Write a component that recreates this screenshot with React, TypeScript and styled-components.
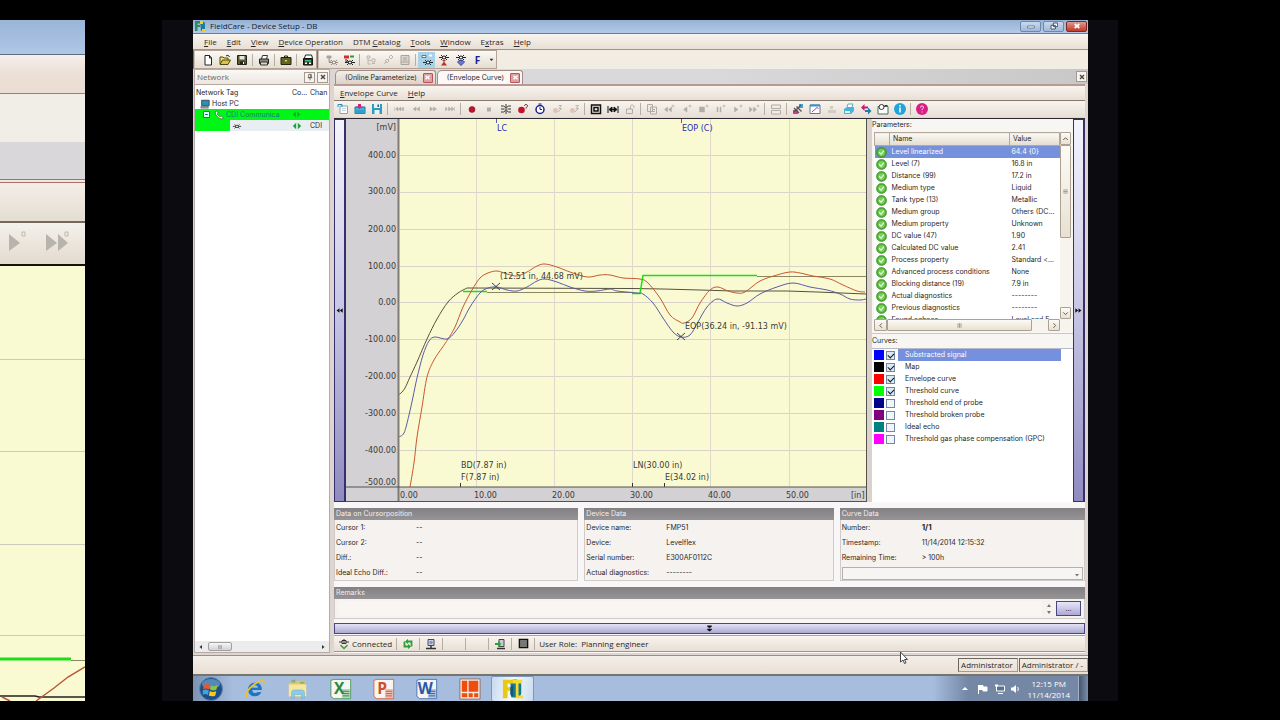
import React from "react";
import styled, { createGlobalStyle, css } from "styled-components";

const UI = `"Open Sans", "Noto Sans", sans-serif`;
const DENSE = `Inter, "DejaVu Sans Condensed", sans-serif`;
const PLOT = `"DejaVu Sans", sans-serif`;

const Global = createGlobalStyle`
  * { box-sizing: border-box; }
  body { margin: 0; background: #000; font: 8px/12px ${UI}; color: #2b2725; }
  button, input, select, textarea { font: inherit; color: inherit; margin: 0; }
  button { padding: 0; border: 0; background: none; }
  u { text-decoration-thickness: 1px; text-underline-offset: 1px; }
`;

/* ---------- page ---------- */
const Stage = styled.div`
  display: flex;
  align-items: stretch;
  min-height: 100vh;
  padding: 20px 0 19px;
  overflow: hidden;
`;
const Backdrop = styled.div`
  flex: 1;
  min-width: 0;
  display: flex;
  margin: 0 162px 0 77px;
  padding: 0 30px 0 31px;
  background: #0b0b10;
`;
const Win = styled.div`
  position: relative;
  flex: 1;
  min-width: 0;
  display: flex;
  flex-direction: column;
  background: #f1ede5;
`;

/* ---------- magnified strip ---------- */
const Strip = styled.div`
  flex: 0 0 85px;
  display: flex;
  flex-direction: column;
`;
const Band = styled.div<{ $h: number; $bg: string; $line?: string }>`
  height: ${(p) => p.$h}px;
  background: ${(p) => p.$bg};
  border-bottom: ${(p) => p.$line ?? "0"};
`;
const StripPlot = styled.svg`
  display: block;
  flex: 1;
  width: 100%;
  background: #fafad2;
`;

/* ---------- window chrome ---------- */
const TitleBar = styled.header`
  display: flex;
  align-items: center;
  height: 14px;
  padding: 0 1px 1px 1px;
  background: linear-gradient(#96b2d4, #b3cae8);
  border-bottom: 1px solid #6f7c90;
`;
const TitleText = styled.span`
  flex: 1;
  padding-left: 4px;
  color: #14202e;
`;
const CaptionButton = styled.button<{ $danger?: boolean }>`
  display: grid;
  place-items: center;
  width: 21px;
  height: 11px;
  margin-left: 2px;
  border: 1px solid ${(p) => (p.$danger ? "#7a2a25" : "#7187aa")};
  border-radius: 2px;
  background: ${(p) =>
    p.$danger ? "linear-gradient(#e09a8c, #c0392b)" : "linear-gradient(#c9d9ee, #9fb9dc)"};
`;
const Bar = styled.div<{ $h: number; $pad?: number; $line?: string }>`
  display: flex;
  align-items: center;
  height: ${(p) => p.$h}px;
  padding-left: ${(p) => p.$pad ?? 0}px;
  background: linear-gradient(#f8f4ef, #e8dfd5);
  border-bottom: 1px solid ${(p) => p.$line ?? "#a58f86"};
`;
const MenuItem = styled.button`
  padding: 0 5px;
  line-height: 12px;
  white-space: nowrap;
`;
const ToolRow = styled.div`
  display: flex;
  height: 19px;
  background: #f1ede3;
`;
const ToolGroup = styled.div`
  display: flex;
  align-items: center;
  padding: 0 0 0 4px;
  background: linear-gradient(#fbf9f5, #e5ddd0);
  border: 1px solid #b3a295;
  border-left: 2px groove #cdbfb5;
`;
const ToolButton = styled.button<{ $on?: boolean; $w?: number }>`
  display: grid;
  place-items: center;
  width: ${(p) => p.$w ?? 17}px;
  height: 16px;
  ${(p) => p.$on && css`background: #a9d2e8;`}
`;
const Sep = styled.span`
  width: 1px;
  height: 12px;
  margin: 0 2px;
  background: #b7aea3;
`;

/* ---------- body ---------- */
const Body = styled.div`
  flex: 1;
  display: flex;
  background: #ded5d0;
`;
const Side = styled.aside`
  flex: 0 0 136px;
  display: flex;
  flex-direction: column;
  margin: 0 4px 2px 1px;
  background: #fff;
  border: 1px solid #b5aca8;
`;
const SideHead = styled.div`
  display: flex;
  align-items: center;
  gap: 2px;
  height: 15px;
  padding: 0 1px 0 2px;
  background: linear-gradient(#fbf9f6, #ece6df);
  border-bottom: 1px solid #b8a9a0;
  color: #6c6864;
`;
const SideTitle = styled.span`
  flex: 1;
`;
const TinyButton = styled.button`
  display: grid;
  place-items: center;
  width: 11px;
  height: 11px;
  border: 1px solid #a39a92;
  background: #f7f4ee;
`;
const Tree = styled.table`
  width: 100%;
  border-collapse: collapse;
  table-layout: fixed;
  font: 7px/11px ${DENSE};
  th, td { padding: 0; height: 11px; line-height: 11px; font-weight: 400; text-align: left; white-space: nowrap; overflow: hidden; }
  thead th { height: 13px; padding-top: 2px; }
  thead th:first-child { padding-left: 1px; }
  svg { display: block; }
`;
const NodeCell = styled.td<{ $indent: number }>`
  && { padding-left: ${(p) => p.$indent}px; }
`;
const NodeLine = styled.span<{ $c?: string }>`
  display: flex;
  align-items: center;
  gap: 2px;
  height: 11px;
  color: ${(p) => p.$c ?? "inherit"};
`;
const TreeRow = styled.tr<{ $fill?: string }>`
  background: ${(p) => p.$fill ?? "none"};
`;
const SideScroll = styled.div`
  display: flex;
  align-items: center;
  justify-content: space-between;
  height: 11px;
  margin-top: auto;
  padding: 0 3px;
  background: #ececec;
`;
const SideThumb = styled.span`
  display: grid;
  place-items: center;
  width: 24px;
  height: 9px;
  margin-right: auto;
  margin-left: 4px;
  border: 1px solid #a0a0a0;
  border-radius: 2px;
  background: linear-gradient(#f6f6f6, #d2d2d2);
`;
const Main = styled.main`
  flex: 1;
  min-width: 0;
  display: flex;
  flex-direction: column;
  padding-bottom: 2px;
`;
const Tabs = styled.div`
  display: flex;
  align-items: flex-end;
  height: 15px;
  padding: 0 1px 0 1px;
  background: linear-gradient(90deg, #d9d9dd, #d9d9db 50%, #c8c8c8);
`;
const Tab = styled.div<{ $active?: boolean }>`
  display: flex;
  align-items: center;
  gap: 6px;
  height: 14px;
  margin-right: 1px;
  padding: 0 2px 0 9px;
  border: 1px solid #a08e86;
  border-bottom: 0;
  border-radius: 5px 3px 0 0;
  background: ${(p) => (p.$active ? "#fbf8f5" : "linear-gradient(#f3eee8, #ddd2c8)")};
`;
const TabLabel = styled.button`
  font: 7px/12px ${DENSE};
  white-space: nowrap;
`;
const TabClose = styled.button`
  display: grid;
  place-items: center;
  width: 10px;
  height: 10px;
  border: 1px solid #b8545c;
  border-radius: 1px;
  background: #e0a0a2;
`;
const TabsEnd = styled.span`
  margin: 0 0 2px auto;
`;
const Doc = styled.div`
  flex: 1;
  display: flex;
  flex-direction: column;
  margin-right: 3px;
  border-top: 2px solid #b89a92;
  background: #f8f6f6;
`;
const Work = styled.div`
  display: flex;
  align-items: stretch;
  border-top: 1px solid #2d2a33;
  background: #d9d2cb;
`;
const SideCollapse = styled.button`
  flex: 0 0 12px;
  display: grid;
  place-items: center;
  border: 1px solid #35306c;
  border-right-width: 2px;
  background: linear-gradient(#f4f4fd, #c8c6e4 50%, #8f8bc0);
`;
const Chart = styled.svg`
  display: block;
  flex: 1;
  min-width: 0;
  height: auto;
  font: 8px ${PLOT};
  fill: #3c3a34;
`;
const Info = styled.section`
  flex: 0 0 201px;
  display: flex;
  flex-direction: column;
  margin-left: 5px;
  background: #f8f6f2;
  font: 7px/12px ${DENSE};
`;
const InfoTitle = styled.h2`
  margin: 0;
  height: 13px;
  font: inherit;
  line-height: 12px;
`;
const ParamBox = styled.div`
  display: grid;
  grid-template-columns: 1fr 11px;
  margin: 0 2px;
`;
const ParamClip = styled.div`
  height: 187px;
  overflow: hidden;
  background: #fff;
`;
const ParamTable = styled.table`
  width: 100%;
  border-collapse: collapse;
  table-layout: fixed;
  th, td { padding: 0 0 0 2px; height: 12px; font-weight: 400; text-align: left; white-space: nowrap; overflow: hidden; }
  td:first-child { padding-left: 1px; }
  th { height: 13px; padding-left: 3px; border: 1px solid #b5a99c; background: linear-gradient(#fbf9f4, #e4dccd); }
`;
const ParamRow = styled.tr<{ $on?: boolean }>`
  background: ${(p) => (p.$on ? "#7590dc" : "none")};
  color: ${(p) => (p.$on ? "#fff" : "inherit")};
  svg { display: block; }
`;
const VScroll = styled.div`
  display: flex;
  flex-direction: column;
  background: #f7f4ee;
`;
const HScroll = styled.div`
  grid-column: 1 / -1;
  display: flex;
  height: 12px;
  padding-right: 11px;
  background: #f7f4ee;
`;
const ScrollPart = styled.button<{ $w?: number; $h?: number; $end?: boolean }>`
  display: grid;
  place-items: center;
  flex: 0 0 auto;
  width: ${(p) => (p.$w ? p.$w + "px" : "auto")};
  height: ${(p) => (p.$h ? p.$h + "px" : "auto")};
  ${(p) => p.$end && css`margin: auto 0 0 auto;`}
  border: 1px solid #aba092;
  border-radius: 1px;
  background: linear-gradient(#fdfbf6, #e8e1d3);
`;
const CurveHead = styled(InfoTitle)`
  height: 16px;
  padding-top: 1px;
  margin-top: 2px;
  border-top: 1px solid #cfc8bf;
  border-bottom: 1px solid #b9b9d0;
`;
const CurveList = styled.ul`
  flex: 1;
  margin: 0;
  padding: 0 12px 0 2px;
  list-style: none;
  background: #fff;
`;
const CurveItem = styled.li<{ $on?: boolean }>`
  display: flex;
  align-items: center;
  height: 12px;
  background: ${(p) => (p.$on ? "linear-gradient(90deg, #fff 24px, #7590dc 24px)" : "none")};
  color: ${(p) => (p.$on ? "#fff" : "inherit")};
`;
const Swatch = styled.span<{ $c: string }>`
  width: 10px;
  height: 10px;
  margin-right: 2px;
  background: ${(p) => p.$c};
`;
const Tick = styled.input`
  appearance: none;
  width: 9px;
  height: 9px;
  border: 1px solid #7388a0;
  background: #f1f4f8;
  &:checked {
    background: #dce9f3;
  }
  &:checked::after {
    content: "";
    display: block;
    width: 5px;
    height: 3px;
    margin: 1px;
    border: solid #101820;
    border-width: 0 0 1px 1px;
    transform: rotate(-45deg);
  }
`;
const CurveLabel = styled.label`
  padding-left: 10px;
`;

/* ---------- data cards ---------- */
const Cards = styled.div`
  display: grid;
  grid-template-columns: 244fr 249fr 245fr;
  gap: 6px;
  margin-top: 6px;
`;
const Card = styled.section`
  background: #f5f2f0;
  border: 1px solid #cfcbc8;
  border-top: 0;
  font: 7px/12px ${DENSE};
`;
const CardHead = styled.h3`
  margin: 0 -1px;
  height: 12px;
  padding-left: 2px;
  background: linear-gradient(#828082, #979497);
  color: #f1efef;
  font: inherit;
`;
const Fields = styled.dl`
  display: grid;
  grid-template-columns: 80px 1fr;
  grid-auto-rows: 15px;
  margin: 0;
  padding-left: 1px;
  line-height: 15px;
  dt, dd { margin: 0; }
`;
const Strong = styled.b`
  font-size: 8px;
`;
const Combo = styled.select`
  display: block;
  width: calc(100% - 2px);
  height: 13px;
  margin: 2px 1px 0;
  border: 1px solid #b3b0ae;
  background: #f7f5f4;
  appearance: none;
`;
const ComboWrap = styled.div`
  position: relative;
  svg { position: absolute; right: 4px; top: 5px; }
`;
const Remarks = styled(Card)`
  margin-top: 6px;
  height: 32px;
`;
const RemarkRow = styled.div`
  display: flex;
  align-items: center;
  gap: 4px;
  height: 19px;
  padding: 0 3px 0 4px;
`;
const RemarkText = styled.input`
  flex: 1;
  height: 15px;
  border: 0;
  background: #f8f5f3;
`;
const More = styled.button`
  width: 25px;
  height: 15px;
  border: 1px solid #4b4680;
  background: linear-gradient(#e8e7f7, #aba8d4);
  line-height: 8px;
`;
const Fold = styled.button`
  display: grid;
  place-items: center;
  height: 11px;
  margin-top: 4px;
  border: 1px solid #4b4680;
  background: linear-gradient(#e4e2f6, #aba8d2);
`;
const Status = styled(Bar)`
  margin-top: 1px;
  border-top: 1px solid #aaa49d;
`;
const StatusText = styled.span`
  padding: 0 2px;
`;
const StatusCell = styled.span`
  display: grid;
  place-items: center;
  width: 18px;
`;
const AppStatus = styled.footer`
  display: flex;
  align-items: center;
  justify-content: flex-end;
  gap: 1px;
  height: 21px;
  background: linear-gradient(#f4eee8, #e9e0d4);
  border-top: 1px solid #9d8f86;
  border-bottom: 2px solid #77736f;
`;
const UserBox = styled.span`
  height: 14px;
  padding: 0 4px 0 2px;
  border: 1px solid #a59a8e;
  border-top-color: #6c655e;
  border-left-color: #6c655e;
`;

/* ---------- task bar ---------- */
const TaskBar = styled.nav`
  display: flex;
  align-items: center;
  height: 25px;
  background: linear-gradient(90deg, #7d93b4, #a6bddd 40px, #a6bddd 740px, #7488a5 775px);
`;
const TaskButton = styled.button<{ $on?: boolean; $start?: boolean }>`
  display: grid;
  place-items: center;
  width: ${(p) => (p.$start ? 35 : 43)}px;
  height: 25px;
  margin-right: ${(p) => (p.$start ? 5 : 0)}px;
  ${(p) =>
    p.$on &&
    css`
      border: 1px solid #7d97bb;
      border-bottom: 0;
      border-radius: 2px;
      background: linear-gradient(100deg, #c8daee, #f3f8fc 50%, #cadcf0);
    `}
`;
const Tray = styled.div`
  display: flex;
  align-items: center;
  gap: 6px;
  margin-left: auto;
  color: #fff;
`;
const Clock = styled.time`
  padding: 0 2px;
  text-align: center;
  line-height: 11px;
`;
const ShowDesktop = styled.button`
  width: 10px;
  height: 25px;
  border-left: 1px solid #9fb0c8;
  background: linear-gradient(90deg, #48566c, #7a8da9);
`;
const Pointer = styled.svg`
  position: absolute;
  left: 79%;
  bottom: 36px;
`;

/* ---------- icons ---------- */
const dev = (c = "#333") => (
  <g stroke={c} fill="none">
    <path d="M1 6.500h10M3 4l2 2M9 4L7 6M3 9l2-2M9 9L7 7" />
    <circle cx="6" cy="6.500" r="1.500" fill="#fff" />
  </g>
);
const seek = (d: string, sup = false) => (
  <g fill="#b3aca4" stroke="#b3aca4">
    <path d={d} strokeWidth=".5" />
    {sup && <circle cx="10" cy="3" r="1" fill="none" strokeWidth=".7" />}
  </g>
);
const art: Record<string, React.ReactNode> = {
  new: <path d="M3 1.500h4.500L9.500 4v7H3zM7.500 1.500V4h2" fill="#fff" stroke="#222" />,
  open: (
    <>
      <path d="M1 10V3h3l1 1h4v2" fill="#f3e27a" stroke="#4d4a12" />
      <path d="M1 10.500L3.500 6h8L9 10.500z" fill="#d9c34a" stroke="#4d4a12" />
      <path d="M7 2c1.500-1.200 3-.5 3.500 1" fill="none" stroke="#222" />
    </>
  ),
  save: (
    <>
      <path d="M1.500 1.500h9v9h-9z" fill="#5d5c30" stroke="#222" />
      <path d="M3.500 2h5v3.500h-5z" fill="#e8e6dc" />
      <path d="M4 7.500h4.500v3H4z" fill="#222" />
      <path d="M7 8h1v2H7z" fill="#fff" />
    </>
  ),
  print: (
    <>
      <path d="M3.500 5L4.500 1.500h5L8.500 5" fill="#fff" stroke="#333" />
      <path d="M1.500 5h9v4.500h-9z" fill="#8a887c" stroke="#222" />
      <path d="M2.500 8h7v3h-7z" fill="#d8d6c8" stroke="#333" />
    </>
  ),
  bag: (
    <>
      <path d="M4.500 4V2h3v2" fill="none" stroke="#222" />
      <path d="M1 3.500h10v7H1z" fill="#62661f" stroke="#23250c" />
      <path d="M5 6h2v1.500H5z" fill="#d8d27c" />
    </>
  ),
  catalog: (
    <>
      <path d="M2.500 4l1-3h6l1 3" fill="#fff" stroke="#222" />
      <path d="M1.500 4.500h9v6.500h-9z" fill="#333" stroke="#111" />
      <path d="M3 6h6v1.500H3z" fill="#39c06c" />
      <path d="M3 8.500h2v1.500H3zM7 8.500h2v1.500H7z" fill="#fff" />
    </>
  ),
  addDev: (
    <>
      <path d="M1 2h4v2H1zM3 4v4h2" fill="#aaa49c" stroke="#aaa49c" />
      <g transform="translate(2 2)">{dev("#8d8880")}</g>
    </>
  ),
  delDev: (
    <>
      <path d="M1 1.500h5v3H1z" fill="#d22c2c" />
      <path d="M3 5v3h2" fill="none" stroke="#333" />
      <path d="M7 2.500h4" stroke="#2b9a3c" strokeWidth="2" />
      <g transform="translate(1 2)">{dev("#222")}</g>
    </>
  ),
  treeOff: <path d="M2 2h3v2H2zM3 4v6h3M3 6.500h3M7 5h3v3H7zM7 9.500h3" fill="none" stroke="#bdb6ae" />,
  linkOff: <path d="M2 10l2.500-2.500M5 5l2 2-2 2-2-2zM7 3l2 2 2-2-2-2zM6 6l1-1" fill="none" stroke="#bdb6ae" />,
  docOff: <path d="M2 1.500h8v9H2zM4 4h4M4 6h4M2 8h8" fill="#dcd6cf" stroke="#aaa39b" />,
  online: (
    <>
      <path d="M1 1.500h4v2H1z" fill="#fff" stroke="#4b7bb0" />
      <path d="M8 1.500h3" stroke="#fff" strokeWidth="2" />
      <g transform="translate(1 2)">{dev("#1c2b3b")}</g>
    </>
  ),
  upload: (
    <>
      <g transform="translate(0 -3)">{dev("#222")}</g>
      <path d="M3 11.500L6 7.500l3 4zM4 6h4L6 8z" fill="#b8322c" />
    </>
  ),
  download: (
    <>
      <g transform="translate(0 -3)">{dev("#222")}</g>
      <path d="M6 11.500L2.500 8 4 6.500h4L9.500 8z" fill="#6b7ad0" stroke="#3a468f" />
    </>
  ),
  caret: <path d="M3.500 5h5L6 8z" fill="#222" />,
  sheet: (
    <>
      <path d="M3 3h7.500v7.500H3z" fill="#fff" stroke="#7fa6bc" />
      <path d="M1 4V1.500h4V4" fill="none" stroke="#1e8fbf" />
      <path d="M5 5.500h4M5 7.500h4" stroke="#b9d0dc" />
    </>
  ),
  openBlue: (
    <>
      <path d="M1 4h10v6.500H1z" fill="#3cb6dc" stroke="#187aa0" />
      <path d="M4 1h3v2.500h2L5.500 6 2 3.500h2z" fill="#d8227c" />
      <path d="M1 7h10v3.500H1z" fill="#2aa0cc" />
    </>
  ),
  saveBlue: (
    <>
      <path d="M1 1h10v10H1z" fill="#2b9cc4" />
      <path d="M3 1h6v4H3zM3.500 7h5v4h-5z" fill="#e9f3f6" />
      <path d="M6.500 1.500h1.500v2.500H6.500z" fill="#20607a" />
    </>
  ),
  first: seek("M1.500 4v4M5 4L2.500 6 5 8zM8 4L5.500 6 8 8zM10.500 4L8.500 6l2 2z"),
  prev: seek("M6 4L3 6l3 2zM9.500 4L6.500 6l3 2z"),
  next: seek("M3 4l3 2-3 2zM6.500 4l3 2-3 2z"),
  last: seek("M1.500 4l2 2-2 2zM4.500 4L7 6 4.500 8zM7.500 4L10 6 7.500 8zM10.500 4v4"),
  rec: <circle cx="6" cy="6.500" r="3" fill="#c3122a" stroke="#7c0a18" strokeWidth=".5" />,
  stop: <path d="M4 4.500h4v4H4z" fill="#b3aca4" />,
  tune: <path d="M6 1v10M3.500 3l2 1.500M1 3h2.500M1 6h3.500M1 9h2.500l2-1.500M8.500 3l-2 1.500M11 3H8.500M11 6H7.500M11 9H8.500l-2-1.500" stroke="#333" fill="none" />,
  recQ: (
    <>
      <circle cx="4.500" cy="7" r="3.300" fill="#c3122a" />
      <path d="M7.500 3c0-2 3-2 3 0 0 1-1.500 1-1.500 2.500" fill="none" stroke="#5a1a1a" />
    </>
  ),
  timer: (
    <>
      <circle cx="6" cy="6.500" r="4" fill="#fff" stroke="#16208f" strokeWidth="1.500" />
      <path d="M6 4v2.500h2M4.500 1h3" fill="none" stroke="#16208f" />
    </>
  ),
  ghost: (
    <>
      <circle cx="4.500" cy="7.500" r="2.500" fill="#dfc3ba" />
      <path d="M7.500 2.500h3L8 5.500h2.500L7 9" fill="none" stroke="#c3b4ab" />
    </>
  ),
  frame: <path d="M1.500 2h9v8.500h-9zM4 4.500h4v3.500H4z" fill="none" stroke="#111" strokeWidth="1.500" />,
  span: <path d="M1 3v7M11 3v7M2 6.500l3-2.500v5zM10 6.500L7 4v5zM4 6.500h4" fill="#111" stroke="#111" />,
  unlock: <path d="M2.500 6h6v4.500h-6zM6.500 6V3.500c0-2 3.500-2 3.500 0V5" fill="none" stroke="#b3aca4" />,
  copy: <path d="M1.500 1.500h5v7h-5zM4.500 4h6v7h-6zM6 6.500h3M6 8.500h3" fill="#efeae4" stroke="#b3aca4" />,
  dPrev2: seek("M4.500 4v5L1.500 6.500zM8.500 4v5L5.500 6.500z", true),
  dPrev: seek("M7 4v5L3.500 6.500z", true),
  dStop: seek("M2.500 4h5v5h-5z", true),
  dPause: seek("M3 4h1v5H3zM6 4h1v5H6z", true),
  dNext: seek("M3.500 4v5L7 6.500z", true),
  dNext2: seek("M1.500 4v5l3-2.500zM5.500 4v5l3-2.500z", true),
  split: <path d="M1.500 2h9v3.500h-9zM1.500 7.500h9V11h-9z" fill="#f1ece6" stroke="#b3aca4" />,
  wand: (
    <>
      <path d="M1 7h5v4H1z" fill="#d8379a" />
      <path d="M7 1h4v4H7z" fill="#3ba3d8" />
      <path d="M2 5l5 5M4.500 3.500l5 5M2 9l7-7" stroke="#555" strokeWidth="1.300" />
    </>
  ),
  graph: (
    <>
      <path d="M1 2h10v8.500H1z" fill="#fff" stroke="#5f7d9c" />
      <path d="M1 2.500h10" stroke="#3c8fc9" strokeWidth="2" />
      <path d="M3 9l5-4.500 1.500 1" stroke="#c03a8a" fill="none" />
    </>
  ),
  grey: <path d="M2 7h8v3H2zM4 3h3v3H4z" fill="#d2ccc5" />,
  printBlue: (
    <>
      <path d="M4 4l1-3h5L9 4" fill="#fff" stroke="#6aa6c4" />
      <path d="M1 6l3-2h7v4l-3 3H1z" fill="#45b5dd" />
      <path d="M2 8h5v2H2z" fill="#e3f4fa" />
    </>
  ),
  swap: (
    <>
      <path d="M1 4.500L4.500 1v2.500H8v2H4.500V8z" fill="#c51f74" />
      <path d="M11.500 8L8 4.500V7H5v2h3v2.500z" fill="#1c7fae" />
    </>
  ),
  folderClock: (
    <>
      <path d="M1 3.500h10V11H1z" fill="#fdfdfa" stroke="#4c6a60" />
      <circle cx="4.500" cy="4" r="2.500" fill="#fff" stroke="#333" />
      <path d="M7.500 2.500h3" stroke="#333" />
    </>
  ),
  info: (
    <>
      <circle cx="6" cy="6" r="6" fill="#22a4da" />
      <path d="M6 2v1.500M6 4.500v5" stroke="#fff" strokeWidth="1.500" />
    </>
  ),
  help: (
    <>
      <circle cx="6" cy="6" r="6" fill="#d81f86" />
      <path d="M4.500 4.500c0-2 3-2 3 0 0 1-1.500 1-1.500 2.500M6 8.500V9.500" fill="none" stroke="#fff" />
    </>
  ),
  device: dev(),
  ok: (
    <>
      <circle cx="6" cy="6" r="5.500" fill="#4cab32" stroke="#3c8f2c" strokeWidth=".7" />
      <circle cx="6" cy="6" r="3.700" fill="#78cf58" />
      <path d="M3.500 5.500l2 2.500L8.500 4" fill="none" stroke="#e6fbdc" strokeWidth="1.300" />
    </>
  ),
  pc: (
    <>
      <path d="M2 1.500h9v6.500H2z" fill="#2f8fb0" stroke="#24424f" />
      <path d="M1 9h9v2H1z" fill="#9aa4a8" stroke="#333" strokeWidth=".5" />
    </>
  ),
  phone: (
    <path d="M1.500 2l2-1 1.500 2.500-1 1c.5 1.500 2 3 3.500 3.500l1-1L11 9l-1 2C6 11 1 6 1.500 2z" fill="#e4fbe0" stroke="#2d7a34" />
  ),
  conn: <path d="M5 2v8L1 6zM7 2v8l4-4z" fill="#1ea33a" />,
  connected: (
    <>
      <path d="M1 4h3M8 4h3M4 2.500h4v3H4zM6 1v4" fill="none" stroke="#333" />
      <path d="M2.500 7L6 10.500 9.500 7" fill="none" stroke="#3d9a47" strokeWidth="1.500" />
    </>
  ),
  refresh: (
    <g fill="none" stroke="#2f9c3c" strokeWidth="1.800">
      <path d="M9.500 8.500V3.500H5M2.500 3.500V8.500H7" />
      <path d="M5.500 1.500L3.500 3.500l2 2zM6.500 6.500l2 2-2 2z" fill="#2f9c3c" strokeWidth=".8" />
    </g>
  ),
  user: (
    <>
      <path d="M3 1.500h6v6H3z" fill="#cdd2e6" stroke="#444a66" />
      <circle cx="6" cy="4.500" r="1.800" fill="#8b94c4" />
      <path d="M1 10.500h10M6 8v2" stroke="#333" strokeWidth="1.500" />
    </>
  ),
  sync: (
    <>
      <path d="M5 1.500h5v7H5z" fill="#c9cfd4" stroke="#444" />
      <path d="M1 5h3V3l3.500 3L4 9V7H1z" fill="#2fa045" />
      <path d="M3 10.500h8" stroke="#333" strokeWidth="1.500" />
    </>
  ),
  square: <path d="M1.500 1.500h9v9h-9z" fill="#7a7777" stroke="#111" strokeWidth="1.500" />,
  cross: <path d="M3 3l6 6M9 3L3 9" stroke="#4a4440" strokeWidth="2" />,
  crossWhite: <path d="M2.500 3l7 6M9.500 3l-7 6" stroke="#fff" strokeWidth="2.500" />,
  pin: <path d="M4 2h4v5H4zM2.500 7h7M6 7v4M7 2v5" fill="none" stroke="#4a4440" />,
  minimize: <path d="M1 6h10v3H1z" fill="#fff" stroke="#44546c" />,
  restore: <path d="M5 1.500h6.500V7H5zM1.500 5H8v5.500H1.500z" fill="#fff" stroke="#44546c" strokeWidth="1.500" />,
  dLeft: <path d="M6 2v8L1 6zM11.500 2v8L6.500 6z" fill="#111" />,
  dRight: <path d="M6 2v8l5-4zM.5 2v8l5-4z" fill="#111" />,
  dDown: <path d="M2 1h8v1.500L6 5.500 2 2.500zM2 6.500h8V8l-4 3-4-3z" fill="#111" />,
  up: <path d="M3 8l3-3 3 3" fill="none" stroke="#5b554e" strokeWidth="1.300" />,
  down: <path d="M3 4.500l3 3 3-3" fill="none" stroke="#5b554e" strokeWidth="1.300" />,
  left: <path d="M8 3L5 6l3 3" fill="none" stroke="#5b554e" strokeWidth="1.300" />,
  right: <path d="M4.500 3l3 3-3 3" fill="none" stroke="#5b554e" strokeWidth="1.300" />,
  triL: <path d="M8 2v8L3 6z" fill="#333" />,
  triR: <path d="M4 2v8l5-4z" fill="#333" />,
  triD: <path d="M2 4h8L6 9z" fill="#777" />,
  gripV: <path d="M3 4h6M3 6h6M3 8h6" stroke="#8b8379" />,
  gripH: <path d="M4 3v6M6 3v6M8 3v6" stroke="#8b8379" />,
  app: (
    <>
      <path d="M1 1h5v2.500H3.500V5H6v2H3.500v4H1z" fill="#2b8e5a" />
      <path d="M6 2c3-1 5 0 5 2v5c0 2-2 2-4 2z" fill="#1f7d9a" />
      <path d="M6 1h3v3H6zM8 9h3v2H8z" fill="#e9d62c" />
    </>
  ),
  start: (
    <>
      <circle cx="12" cy="12" r="11.500" fill="#1d4f86" stroke="#5f86b1" />
      <ellipse cx="12" cy="7" rx="9" ry="5" fill="#7fb1d9" opacity=".6" />
      <path d="M5 8c2-1.500 4-1.500 6 0l-1 4.500c-2-1.500-4-1.500-6 0z" fill="#e8582a" />
      <path d="M12 8.500c2 1 4 1 6.500-.5l-1 4.500c-2 1.200-4.500 1.200-6.500 0z" fill="#8cc53f" />
      <path d="M3.800 13.500c2-1.500 4-1.300 6 0l-1 4.500c-2-1.500-4-1.300-5 0z" fill="#3fa3e0" />
      <path d="M10.800 14c2 1.200 4.500 1.200 6.500 0l-1 4.500c-2 1.200-4.500 1-6.500 0z" fill="#fbc71f" />
    </>
  ),
  ie: (
    <>
      <path d="M19 15.500c-1.500 3-4 4.500-7 4.500-4.500 0-7.500-3-7.500-7.500S8 5 12.300 5c4.500 0 7.300 3.200 7.200 8H9c0 2.200 1.300 3.400 3.200 3.400 1.300 0 2.200-.4 2.800-1.200zM9 10.500h6.200C15 8.800 13.800 8 12.200 8S9.300 9 9 10.500z" fill="#1c76c4" />
      <path d="M3 21c-3-2 1-9 8-14s12-5 11-1" fill="none" stroke="#efc22c" strokeWidth="2" />
    </>
  ),
  explorer: (
    <>
      <path d="M2 5h7l2-2h9v17H2z" fill="#e3c46a" />
      <path d="M2 7h19v13H2z" fill="#f7e6a0" />
      <path d="M5 2h4v3H5zM14 4h5v2h-5z" fill="#7fb95c" />
      <path d="M5 22v-6c0-2 1-3 3-3h8c2 0 3 1 3 3v6h-3v-4H8v4z" fill="#8ccbe8" stroke="#5ba4c9" strokeWidth=".5" />
    </>
  ),
};
const office = (c: string, letter: string) => (
  <>
    <path d="M1 2.500L5 1.500h17.500v21H4L1 20z" fill="#f6f5f2" stroke={c} strokeWidth=".8" />
    <path d="M13 12h9v10h-9z" fill={c} opacity=".3" />
    <path d="M14 14.500h7M14 17h7M14 19.500h7" stroke={c} />
    <text x="10" y="17.500" textAnchor="middle" fontSize="17" fontWeight="700" fontFamily="Open Sans" fill={c}>
      {letter}
    </text>
  </>
);
art.excel = office("#2a8a3e", "X");
art.ppt = office("#d0502a", "P");
art.word = office("#2a59a8", "W");
art.tiles = (
  <>
    <path d="M1 1h22v22H1z" fill="#f3ece6" stroke="#8e6a5a" />
    <path d="M3 3h6v12H3zM10.500 3H21v12H10.500zM3 16.500h6V21H3zM10.500 16.500h4.500V21h-4.500zM16.500 16.500H21V21h-4.500z" fill="#f04c0c" />
  </>
);
art.fc = (
  <>
    <path d="M9 3c6-3 12-1 12 5v8c0 5-5 6-11 5z" fill="#16788f" />
    <path d="M1 2h11v4H6v4h5v4H6v8H1z" fill="#e8ca12" />
    <path d="M12 2h10v4h-4v13h5v3h-8V6h-3z" fill="#f2dc30" />
    <path d="M12 8v12c-2 0-3-1-3-3v-7z" fill="#0c5a78" />
  </>
);

const Icon = ({ name, size = 12, big }: { name: string; size?: number; big?: boolean }) => (
  <svg width={size} height={size} viewBox={big ? "0 0 24 24" : "0 0 12 12"} aria-hidden="true">
    {art[name]}
  </svg>
);
const LetterF = styled.b`
  color: #16208f;
  font: 700 10px/12px ${UI};
`;

const Tools = ({ items }: { items: string[] }) => (
  <>
    {items.map((n, i) =>
      n === "|" ? (
        <Sep key={i} />
      ) : (
        <ToolButton key={i} $on={n === "online"} $w={n === "caret" ? 10 : 17} aria-label={n}>
          {n === "F" ? <LetterF>F</LetterF> : <Icon name={n} size={n === "caret" ? 9 : 12} />}
        </ToolButton>
      )
    )}
  </>
);

const Menu = ({ items }: { items: [string, string, string][] }) => (
  <>
    {items.map(([a, k, b]) => (
      <MenuItem key={a + k + b}>
        {a}
        <u>{k}</u>
        {b}
      </MenuItem>
    ))}
  </>
);

/* ---------- chart ---------- */
type P = [number, number];
const smooth = (p: P[]) => {
  let d = `M${p[0][0]} ${p[0][1]}`;
  for (let i = 0; i < p.length - 1; i++) {
    const a = p[i - 1] ?? p[i];
    const b = p[i];
    const c = p[i + 1];
    const e = p[i + 2] ?? c;
    d += `C${b[0] + (c[0] - a[0]) / 6} ${b[1] + (c[1] - a[1]) / 6} ${c[0] - (e[0] - b[0]) / 6} ${c[1] - (e[1] - b[1]) / 6} ${c[0]} ${c[1]}`;
  }
  return d;
};
const mapCurve: P[] = [[398, 395], [401, 393], [405, 388], [410, 377], [417, 362], [427, 339], [437, 319], [448, 302], [458, 293], [467, 288]];
const envelope: P[] = [[410, 487], [414, 463], [417, 437], [422, 407], [427, 377], [434, 360], [442, 348], [448, 339], [455, 327], [463, 307], [472, 290], [480, 278], [488, 273], [497, 271], [507, 274], [517, 276], [527, 272], [537, 266], [545, 264], [557, 267], [570, 272], [587, 277], [600, 275], [610, 275], [623, 278], [640, 279], [648, 283], [660, 298], [670, 315], [680, 322], [684, 323], [692, 318], [700, 303], [710, 290], [718, 287], [728, 291], [737, 293], [745, 292], [760, 281], [777, 275], [790, 272], [800, 273], [813, 276], [830, 279], [843, 285], [857, 291], [865, 292]];
const signal: P[] = [[398, 437], [404, 433], [409, 415], [413, 397], [417, 378], [423, 355], [429, 341], [435, 337], [447, 339], [455, 332], [463, 320], [470, 307], [480, 293], [488, 288], [497, 287], [507, 290], [517, 291], [527, 287], [537, 281], [545, 279], [557, 282], [570, 287], [585, 291], [597, 291], [610, 289], [617, 291], [637, 293], [643, 294], [653, 303], [663, 318], [673, 332], [681, 337], [690, 335], [698, 322], [707, 307], [717, 299], [727, 303], [737, 306], [747, 303], [760, 294], [777, 287], [793, 283], [810, 287], [827, 290], [840, 294], [850, 299], [860, 300], [866, 299]];
const yTicks: [string, number][] = [["[mV]", 127], ["400.00", 155], ["300.00", 191], ["200.00", 229], ["100.00", 266], ["0.00", 302], ["-100.00", 339], ["-200.00", 376], ["-300.00", 413], ["-400.00", 450], ["-500.00", 482]];
const gridY = [155, 192, 229, 266, 302, 339, 376, 413, 450];
const gridX = [476, 554, 632, 710, 789];
const xTicks: [string, number][] = [["0.00", 400], ["10.00", 474], ["20.00", 552], ["30.00", 630], ["40.00", 708], ["50.00", 786], ["[in]", 851]];

const EnvelopeChart = () => (
  <Chart viewBox="346 119 521 383" role="img" aria-label="Envelope curve">
    <path d="M346 119h521v383H346z" fill="#d3d1d3" />
    <path d="M398 119h468v368H398z" fill="#fafad2" />
    {gridY.map((y) => (
      <path key={y} d={`M400 ${y}.5H866`} stroke="#d9d4ca" />
    ))}
    {gridX.map((x) => (
      <path key={x} d={`M${x}.5 119V487`} stroke="#e0d8cc" />
    ))}
    <g fill="none">
      <path d="M487 292.500H633M757 276.500H866" stroke="#8b8762" />
      <path d={smooth(mapCurve) + "L632 288.500L663 289L700 290L733 291L787 291L817 292L866 294"} stroke="#55523c" />
      <path d="M463 291.500H487M632 293.500H640L643 275.500H757" stroke="#14e014" strokeWidth="1.500" />
      <path d={smooth(envelope)} stroke="#c8562f" />
      <path d={smooth(signal)} stroke="#5a5aa6" />
      <path d="M492 283l8 7M500 283l-8 7M677 333l8 7M685 333l-8 7" stroke="#444" />
      <path d="M496.500 119v4M681.500 119v4" stroke="#5b58a8" />
      <path d="M460.500 483v4M632.500 483v4M664.500 483v4" stroke="#333" />
      <path d="M398.500 119V502" stroke="#7e7c74" strokeWidth="2" />
      <path d="M346 487H866M346 501.500H866M866.500 119V502" stroke="#55524e" />
    </g>
    {yTicks.map(([t, y]) => (
      <text key={t} x="396" y={y + 3} textAnchor="end">{t}</text>
    ))}
    {xTicks.map(([t, x]) => (
      <text key={t} x={x} y="498">{t}</text>
    ))}
    <text x="497" y="131" fill="#2a2ab4">LC</text>
    <text x="682" y="131" fill="#2a2ab4">EOP (C)</text>
    <text x="500" y="279">(12.51 in, 44.68 mV)</text>
    <text x="685" y="329">EOP(36.24 in, -91.13 mV)</text>
    <text x="461" y="468">BD(7.87 in)</text>
    <text x="461" y="480">F(7.87 in)</text>
    <text x="633" y="468">LN(30.00 in)</text>
    <text x="665" y="480">E(34.02 in)</text>
  </Chart>
);

const params: [string, string][] = [
  ["Level linearized", "64.4 {0}"], ["Level (7)", "16.8 in"], ["Distance (99)", "17.2 in"], ["Medium type", "Liquid"],
  ["Tank type (13)", "Metallic"], ["Medium group", "Others (DC..."], ["Medium property", "Unknown"], ["DC value (47)", "1.90"],
  ["Calculated DC value", "2.41"], ["Process property", "Standard <..."], ["Advanced process conditions", "None"],
  ["Blocking distance (19)", "7.9 in"], ["Actual diagnostics", "--------"], ["Previous diagnostics", "--------"], ["Found echoes", "Level and E..."],
];
const curves: [string, string, boolean][] = [
  ["Substracted signal", "#0000ff", true], ["Map", "#000", true], ["Envelope curve", "#ff0000", true], ["Threshold curve", "#00ff00", true],
  ["Threshold end of probe", "#00008b", false], ["Threshold broken probe", "#800080", false], ["Ideal echo", "#008080", false],
  ["Threshold gas phase compensation (GPC)", "#ff00ff", false],
];

const DataCard = ({ title, rows, children }: { title: string; rows: [string, React.ReactNode][]; children?: React.ReactNode }) => (
  <Card>
    <CardHead>{title}</CardHead>
    <Fields>
      {rows.map(([k, v]) => (
        <React.Fragment key={k}>
          <dt>{k}</dt>
          <dd>{v}</dd>
        </React.Fragment>
      ))}
    </Fields>
    {children}
  </Card>
);

const MagnifiedStrip = () => (
  <Strip>
    <Band $h={35} $bg="linear-gradient(#9ab5d8, #afc7e6)" $line="1px solid #5f6a7c" />
    <Band $h={39} $bg="linear-gradient(#f5f0eb, #ecdfd6 50%, #ebddd4)" $line="1px solid #9c7f78" />
    <Band $h={48} $bg="#f1ede7" />
    <Band $h={38} $bg="#d9d7d9" $line="1px solid #a9706a" />
    <Band $h={3} $bg="#f0e8e2" $line="1px solid #a9706a" />
    <Band $h={40} $bg="linear-gradient(#f3eee8, #e4ddd2)" $line="2px solid #75675a" />
    <Band $h={43} $bg="linear-gradient(#f4f0eb, #e3dbcf)" $line="2px solid #15130f">
      <svg width="85" height="41" viewBox="0 0 85 41" aria-hidden="true">
        <path d="M9 11v17l11-8zM46 11v17l11-8zM58 11v17l10-8z" fill="#b9b3ad" />
        <path d="M22 9h3v4h-3zM65 9h3v4h-3z" fill="none" stroke="#bfb8b1" />
      </svg>
    </Band>
    <StripPlot viewBox="0 0 85 435" preserveAspectRatio="xMinYMin slice">
      <path d="M0 93.500h85M0 185.500h85M0 278.500h85M0 369.500h85" stroke="#cdcabb" />
      <path d="M0 393h71" stroke="#1ddc1d" strokeWidth="3" />
      <path d="M71 394.500h14" stroke="#8b8762" />
      <path d="M0 430h35l4 1h46" fill="none" stroke="#222" strokeWidth="1.500" />
      <path d="M2 431l8 4M36 435l18-13 14-11 17-10" fill="none" stroke="#b8573a" strokeWidth="1.500" />
    </StripPlot>
  </Strip>
);

export default function App() {
  return (
    <>
      <Global />
      <Stage>
        <MagnifiedStrip />
        <Backdrop>
          <Win>
            <TitleBar>
              <Icon name="app" />
              <TitleText>FieldCare - Device Setup - DB</TitleText>
              <CaptionButton aria-label="Minimize"><Icon name="minimize" size={8} /></CaptionButton>
              <CaptionButton aria-label="Restore"><Icon name="restore" size={8} /></CaptionButton>
              <CaptionButton $danger aria-label="Close"><Icon name="crossWhite" size={8} /></CaptionButton>
            </TitleBar>
            <Bar $h={16} $pad={6}>
              <Menu
                items={[["", "F", "ile"], ["", "E", "dit"], ["", "V", "iew"], ["", "D", "evice Operation"], ["DTM ", "C", "atalog"], ["", "T", "ools"], ["", "W", "indow"], ["E", "x", "tras"], ["", "H", "elp"]]}
              />
            </Bar>
            <ToolRow>
              <ToolGroup>
                <Tools items={["new", "open", "save", "|", "print", "|", "bag", "|", "catalog"]} />
              </ToolGroup>
              <ToolGroup>
                <Tools items={["addDev", "delDev", "|", "treeOff", "linkOff", "docOff", "|", "online", "upload", "download", "F", "caret"]} />
              </ToolGroup>
            </ToolRow>

            <Body>
              <Side>
                <SideHead>
                  <SideTitle>Network</SideTitle>
                  <TinyButton aria-label="Pin"><Icon name="pin" size={8} /></TinyButton>
                  <TinyButton aria-label="Close panel"><Icon name="cross" size={8} /></TinyButton>
                </SideHead>
                <Tree>
                  <colgroup><col /><col width="18" /><col width="19" /></colgroup>
                  <thead>
                    <tr><th>Network Tag</th><th>Co...</th><th>Chan</th></tr>
                  </thead>
                  <tbody>
                    <TreeRow>
                      <NodeCell $indent={5} colSpan={3}><NodeLine><Icon name="pc" size={10} />Host PC</NodeLine></NodeCell>
                    </TreeRow>
                    <TreeRow $fill="#00f614">
                      <NodeCell $indent={8}>
                        <NodeLine $c="#157b8a">
                          <svg width="7" height="7" aria-hidden="true"><path d="M.5 .5h6v6h-6zM2 3.500h3" fill="#dff" stroke="#276" /></svg>
                          <span /><Icon name="phone" size={10} />CDI Communica
                        </NodeLine>
                      </NodeCell>
                      <td><Icon name="conn" size={9} /></td>
                      <td />
                    </TreeRow>
                    <TreeRow $fill="linear-gradient(90deg, #00f614 35px, #e8eef2 35px)">
                      <NodeCell $indent={37}><NodeLine><Icon name="device" size={10} /></NodeLine></NodeCell>
                      <td><Icon name="conn" size={10} /></td>
                      <td>CDI</td>
                    </TreeRow>
                  </tbody>
                </Tree>
                <SideScroll>
                  <Icon name="triL" size={6} />
                  <SideThumb><Icon name="gripH" size={8} /></SideThumb>
                  <Icon name="triR" size={6} />
                </SideScroll>
              </Side>

              <Main>
                <Tabs>
                  <Tab>
                    <TabLabel>(Online Parameterize)</TabLabel>
                    <TabClose aria-label="Close tab"><Icon name="crossWhite" size={7} /></TabClose>
                  </Tab>
                  <Tab $active>
                    <TabLabel>(Envelope Curve)</TabLabel>
                    <TabClose aria-label="Close tab"><Icon name="crossWhite" size={7} /></TabClose>
                  </Tab>
                  <TabsEnd><TinyButton aria-label="Close document"><Icon name="cross" size={8} /></TinyButton></TabsEnd>
                </Tabs>
                <Doc>
                  <Bar $h={15} $pad={1} $line="#857a6c">
                    <Menu items={[["", "E", "nvelope Curve"], ["", "H", "elp"]]} />
                  </Bar>
                  <Bar $h={17} $line="#e0d9cf">
                    <Tools
                      items={["sheet", "openBlue", "saveBlue", "|", "first", "prev", "next", "last", "|", "rec", "stop", "tune", "recQ", "timer", "ghost", "ghost", "|", "frame", "span", "unlock", "|", "copy", "dPrev2", "dPrev", "dStop", "dPause", "dNext", "dNext2", "|", "split", "|", "wand", "graph", "grey", "printBlue", "swap", "folderClock", "info", "|", "help"]}
                    />
                  </Bar>
                  <Work>
                    <SideCollapse aria-label="Collapse left"><Icon name="dLeft" size={7} /></SideCollapse>
                    <EnvelopeChart />
                    <Info>
                      <InfoTitle>Parameters:</InfoTitle>
                      <ParamBox>
                        <ParamClip>
                          <ParamTable>
                            <colgroup><col width="15" /><col /><col width="50" /></colgroup>
                            <thead><tr><th aria-label="State" /><th>Name</th><th>Value</th></tr></thead>
                            <tbody>
                              {params.map(([n, v], i) => (
                                <ParamRow key={n} $on={i === 0}>
                                  <td><Icon name="ok" size={11} /></td><td>{n}</td><td>{v}</td>
                                </ParamRow>
                              ))}
                            </tbody>
                          </ParamTable>
                        </ParamClip>
                        <VScroll>
                          <ScrollPart $h={13} aria-label="Scroll up"><Icon name="up" size={9} /></ScrollPart>
                          <ScrollPart $h={93} aria-label="Scroll thumb"><Icon name="gripV" size={9} /></ScrollPart>
                          <ScrollPart $h={12} $w={11} $end aria-label="Scroll down"><Icon name="down" size={9} /></ScrollPart>
                        </VScroll>
                        <HScroll>
                          <ScrollPart $w={13} aria-label="Scroll left"><Icon name="left" size={9} /></ScrollPart>
                          <ScrollPart $w={145} aria-label="Scroll thumb"><Icon name="gripH" size={9} /></ScrollPart>
                          <ScrollPart $w={12} $h={12} $end aria-label="Scroll right"><Icon name="right" size={9} /></ScrollPart>
                        </HScroll>
                      </ParamBox>
                      <CurveHead>Curves:</CurveHead>
                      <CurveList>
                        {curves.map(([n, c, on], i) => (
                          <CurveItem key={n} $on={i === 0}>
                            <Swatch $c={c} />
                            <Tick type="checkbox" id={"curve" + i} defaultChecked={on} />
                            <CurveLabel htmlFor={"curve" + i}>{n}</CurveLabel>
                          </CurveItem>
                        ))}
                      </CurveList>
                    </Info>
                    <SideCollapse aria-label="Collapse right"><Icon name="dRight" size={7} /></SideCollapse>
                  </Work>

                  <Cards>
                    <DataCard title="Data on Cursorposition" rows={[["Cursor 1:", "--"], ["Cursor 2:", "--"], ["Diff.:", "--"], ["Ideal Echo Diff.:", "--"]]} />
                    <DataCard title="Device Data" rows={[["Device name:", "FMP51"], ["Device:", "Levelflex"], ["Serial number:", "E300AF0112C"], ["Actual diagnostics:", "--------"]]} />
                    <DataCard title="Curve Data" rows={[["Number:", <Strong>1/1</Strong>], ["Timestamp:", "11/14/2014 12:15:32"], ["Remaining Time:", "> 100h"]]}>
                      <ComboWrap>
                        <Combo aria-label="Curve selection" />
                        <Icon name="triD" size={6} />
                      </ComboWrap>
                    </DataCard>
                  </Cards>
                  <Remarks>
                    <CardHead>Remarks</CardHead>
                    <RemarkRow>
                      <RemarkText aria-label="Remarks" />
                      <svg width="6" height="12" viewBox="0 0 6 12" aria-hidden="true">
                        <path d="M1 4h4L3 1zM1 8h4l-2 3z" fill="#777" />
                      </svg>
                      <More>...</More>
                    </RemarkRow>
                  </Remarks>
                  <Fold aria-label="Collapse bottom"><Icon name="dDown" size={7} /></Fold>
                  <Status $h={17} $pad={4}>
                    <Icon name="connected" />
                    <StatusText>Connected</StatusText>
                    <Sep />
                    <StatusCell><Icon name="refresh" /></StatusCell>
                    <Sep />
                    <StatusCell><Icon name="user" /></StatusCell>
                    <Sep /><StatusCell /><Sep /><StatusCell /><Sep />
                    <StatusCell><Icon name="sync" /></StatusCell>
                    <Sep />
                    <StatusCell><Icon name="square" size={11} /></StatusCell>
                    <Sep />
                    <StatusText>User Role:&nbsp; Planning engineer</StatusText>
                  </Status>
                </Doc>
              </Main>
            </Body>

            <AppStatus>
              <UserBox>Administrator</UserBox>
              <UserBox>Administrator / -</UserBox>
            </AppStatus>
            <TaskBar>
              <TaskButton $start aria-label="Start"><Icon name="start" size={24} big /></TaskButton>
              {["ie", "explorer", "excel", "ppt", "word", "tiles", "fc"].map((n) => (
                <TaskButton key={n} $on={n === "fc"} aria-label={n}><Icon name={n} size={22} big /></TaskButton>
              ))}
              <Tray>
                <svg width="60" height="12" viewBox="0 0 60 12" aria-hidden="true">
                  <path d="M2 7h6L5 4z" fill="#fff" />
                  <path d="M18.500 2v9M19 2.500h4v4h-4zM23 4h4v4h-4z" fill="#fff" stroke="#fff" />
                  <path d="M36.500 3h8v5h-8zM38 10.500h5" fill="#5b6f8e" stroke="#fff" />
                  <path d="M35 1.500h3v2h-3z" fill="#fff" />
                  <path d="M51 4.500h2L56 2v8l-3-2.500h-2z" fill="#fff" />
                  <path d="M57.500 4c1 1 1 3 0 4" fill="none" stroke="#fff" />
                </svg>
                <Clock>12:15 PM<br />11/14/2014</Clock>
                <ShowDesktop aria-label="Show desktop" />
              </Tray>
            </TaskBar>
            <Pointer width="8" height="14" viewBox="0 0 8 14" aria-hidden="true">
              <path d="M.5 1v10l2.500-2 1.500 3.500 1.500-.7L4.500 8.500h3z" fill="#fff" stroke="#444" />
            </Pointer>
          </Win>
        </Backdrop>
      </Stage>
    </>
  );
}
